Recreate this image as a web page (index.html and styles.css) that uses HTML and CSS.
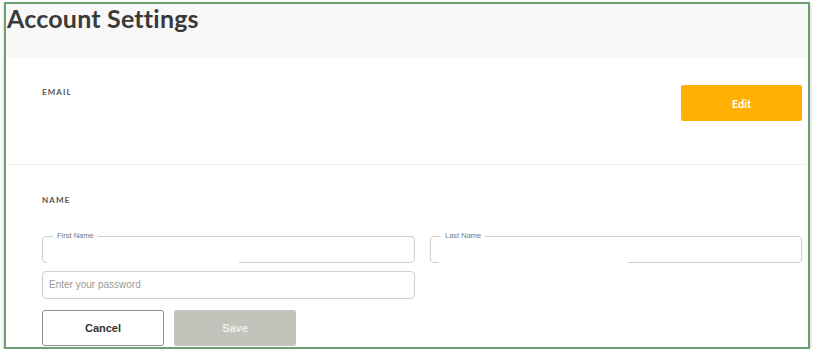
FILE: index.html
```html
<!DOCTYPE html>
<html>
<head>
<meta charset="utf-8">
<link rel="stylesheet" href="styles.css">
</head>
<body>
<div class="frame">
  <div class="header"><h1 class="title">Account Settings</h1></div>
  <section class="email">
    <div class="label">EMAIL</div>
    <button class="btn-edit">Edit</button>
  </section>
  <section class="name">
    <div class="label">NAME</div>
    <div class="row">
      <fieldset class="field field-first"><legend>First Name</legend></fieldset>
      <fieldset class="field field-last"><legend>Last Name</legend></fieldset>
    </div>
    <div class="row">
      <div class="pw">Enter your password</div>
    </div>
    <div class="actions">
      <button class="btn-cancel">Cancel</button>
      <button class="btn-save">Save</button>
    </div>
  </section>
</div>
</body>
</html>
```

FILE: styles.css
```css
html, body { margin: 0; padding: 0; background: #fff; }
body { font-family: Lato, "Open Sans", sans-serif; }
.frame {
  margin: 2px 0 0 4px;
  width: 802px;
  height: 343px;
  border: 2px solid #6e9f73;
  box-shadow: 0 2px 3px rgba(0,0,0,0.25);
  overflow: hidden;
  background: #fff;
}
.header {
  background: #f8f8f8;
  height: 53px;
}
.title {
  margin: 0;
  padding: 2px 0 0 1px;
  font-size: 25px;
  font-weight: 700;
  color: #3a3a3a;
  line-height: 24px;
  letter-spacing: 0.2px;
}
.email {
  display: flex;
  justify-content: space-between;
  align-items: flex-start;
  padding: 28px 4px 0 34px;
  height: 79px;
  margin: 0 2px;
  border-bottom: 1px solid #efefef;
}
.label {
  font-size: 8px;
  font-weight: 700;
  letter-spacing: 1.1px;
  color: #555;
  line-height: 10px;
}
.email .label { margin-top: 2px; }
.btn-edit {
  width: 121px;
  height: 36px;
  margin-top: 0;
  border: none;
  border-radius: 2px;
  background: #ffb000;
  color: #fff;
  font-family: Lato, sans-serif;
  font-weight: 700;
  font-size: 11px;
}
.name { padding: 30px 6px 0 36px; }
.row {
  display: flex;
  gap: 15px;
}
.name .label { margin-bottom: 27px; }
.field {
  position: relative;
  flex-shrink: 0;
  margin: 0;
  padding: 0;
  min-width: 0;
  height: 31px;
  box-sizing: border-box;
  border: 1px solid #cfcfcf;
  border-radius: 4px;
}
.field-first { width: 373px; }
.field-last { width: 372px; }
.field legend {
  margin-left: 10px;
  padding: 0 4px;
  font-size: 7.5px;
  color: #777;
  line-height: 8px;
  font-family: "Liberation Sans", Arial, sans-serif;
}
.field::after {
  content: "";
  position: absolute;
  left: 4px;
  bottom: -2px;
  width: 192px;
  height: 3px;
  background: #fff;
}
.field-last::after { left: 8px; width: 189px; }
.row + .row { margin-top: 8px; }
.pw {
  width: 373px;
  height: 28px;
  box-sizing: border-box;
  border: 1px solid #cfcfcf;
  border-radius: 4px;
  padding-left: 6px;
  font-size: 10px;
  line-height: 26px;
  color: #999;
  font-family: "Liberation Sans", Arial, sans-serif;
}
.actions {
  display: flex;
  gap: 10px;
  margin-top: 11px;
}
.btn-cancel, .btn-save {
  width: 122px;
  height: 36px;
  border-radius: 3px;
  font-family: "Liberation Sans", Arial, sans-serif;
  font-weight: 700;
  font-size: 11px;
}
.btn-cancel {
  background: #fff;
  border: 1px solid #8f8f8f;
  color: #333;
}
.btn-save {
  background: #c3c3bb;
  border: none;
  color: #eeeeea;
}
```
